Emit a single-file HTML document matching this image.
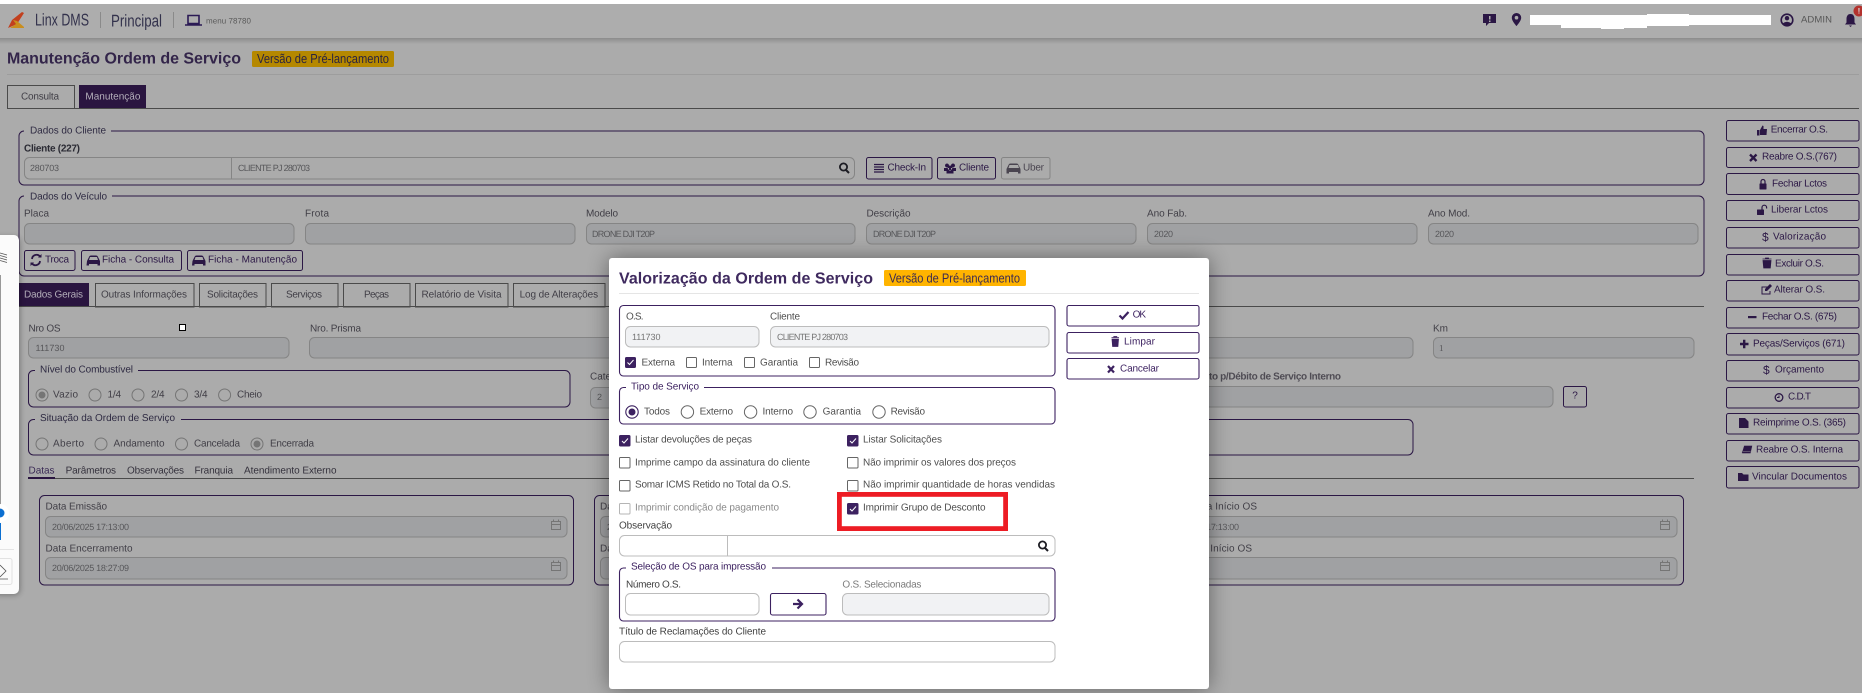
<!DOCTYPE html>
<html lang="pt-BR">
<head>
<meta charset="utf-8">
<title>Valorização da Ordem de Serviço</title>
<style>
html,body{margin:0;padding:0;background:#ababab;overflow:hidden}
svg{display:block;font-family:"Liberation Sans",sans-serif;filter:blur(.3px)}
text{dominant-baseline:central;font-size:10px;text-rendering:geometricPrecision}
.g{fill:#403e46}
.gb{fill:#3f3d45;font-weight:700}
.p{fill:#2b1745}
.v{fill:#57575a;font-size:9px}
.m{fill:#4e4e4e}
.mv{fill:#757575;font-size:9px}
.mp{fill:#3c2160}
.mb{fill:#404040}
.f{fill:none;stroke:#2b1745;stroke-width:1}
.fm{fill:none;stroke:#3c2160;stroke-width:1.1}
.b{fill:#ababab}
.i{fill:#a0a1a3;stroke:#858585;stroke-width:1}
.ie{fill:none;stroke:#858585;stroke-width:1}
.r{fill:none;stroke:#757575;stroke-width:1}
.cal{fill:none;stroke:#757575;stroke-width:1}
.mi{fill:#f1f2f4;stroke:#bcbcbc;stroke-width:1}
.mw{fill:#fff;stroke:#bcbcbc;stroke-width:1}
.cb{fill:#fff;stroke:#666;stroke-width:1}
.ck{fill:#3c2160;stroke:#3c2160;stroke-width:1}
.tk{fill:none;stroke:#fff;stroke-width:1}
</style>
</head>
<body>
<svg width="1862" height="693" viewBox="0 0 1862 693" xmlns="http://www.w3.org/2000/svg">
<defs>
<filter id="s" x="-20%" y="-20%" width="140%" height="140%"><feGaussianBlur stdDeviation="11"/></filter>
<filter id="s2" x="-60%" y="-10%" width="220%" height="120%"><feGaussianBlur stdDeviation="3"/></filter>
<linearGradient id="hs" x1="0" y1="0" x2="0" y2="1"><stop offset="0" stop-color="#8c8c8c"/><stop offset="1" stop-color="#ababab"/></linearGradient>
</defs>

<rect width="1862" height="693" fill="#ababab"/>
<!-- header -->
<rect x="0" y="0" width="1862" height="4" fill="#fff"/>
<rect x="0" y="38" width="1862" height="6" fill="url(#hs)"/>
<rect x="0" y="4" width="1862" height="34" fill="#adadad"/>
<polygon points="22,12 24,13 17,24 8,28 12,20" fill="#c2401e"/>
<polygon points="13,20 17,21 24,27 24,28 10,28 16,24" fill="#c98e1e"/>
<text x="35" y="20" style="font-size:17px" fill="#33324c" textLength="54" lengthAdjust="spacingAndGlyphs">Linx DMS</text>
<rect x="100" y="12" width="1" height="16" fill="#8a8a8a"/>
<text x="111" y="21" style="font-size:17px" fill="#33324c" textLength="51" lengthAdjust="spacingAndGlyphs">Principal</text>
<rect x="173" y="12" width="1" height="16" fill="#8a8a8a"/>
<path d="M188 15.500h11v8h-11zM185 25h17" fill="none" stroke="#2b1a55" stroke-width="1.600"/>
<text x="206" y="21" style="font-size:8px" fill="#5a5a5a" textLength="45">menu 78780</text>

<path d="M1483 14h13v9h-7l-3 3v-3h-3z" fill="#2b1745"/><rect x="1489" y="16" width="1.500" height="3.500" fill="#adadad"/><rect x="1489" y="20.500" width="1.500" height="1.500" fill="#adadad"/>
<path d="M1516.500 13a4.700 4.700 0 0 0-4.700 4.700c0 3.300 4.700 8.300 4.700 8.300s4.700-5 4.700-8.300a4.700 4.700 0 0 0-4.700-4.700z" fill="#2b1745"/><circle cx="1516.500" cy="17.700" r="1.800" fill="#adadad"/>
<path d="M1530 15h77v0h40v-1h42v1h82v10h-82v1h-42v2h-23v1h-23v-1h-40v-3h-31z" fill="#fff"/>
<circle cx="1787" cy="20" r="5.800" fill="none" stroke="#2b1745" stroke-width="1.600"/><circle cx="1787" cy="18.200" r="2.200" fill="#2b1745"/><path d="M1782.500 23.500q4.500-3.500 9 0l-2 2h-5z" fill="#2b1745"/>
<text x="1801" y="20" style="font-size:9.500px" fill="#565656" textLength="31">ADMIN</text>
<path d="M1850.500 14c-3 0-4 2.500-4 5v3.500l-1.500 2h11l-1.500-2V19c0-2.500-1-5-4-5zM1849 25.500h3l-1.500 1.500z" fill="#2b1745"/>
<circle cx="1859" cy="11" r="5.500" fill="#b3322e"/><text x="1859" y="11" style="font-size:8px;font-weight:700" fill="#ddd" text-anchor="middle">!</text>

<!-- page title -->
<text x="7" y="59" style="font-size:16px;font-weight:700" fill="#33254a" textLength="234">Manutenção Ordem de Serviço</text>
<rect x="252" y="51" width="142" height="16" rx="1.500" fill="#b58800"/>
<text x="257" y="58.500" style="font-size:13px" fill="#2a2340" textLength="132" lengthAdjust="spacingAndGlyphs">Versão de Pré-lançamento</text>
<rect x="7" y="74" width="1852" height="1" fill="#9d9d9d"/>

<!-- top tabs -->
<rect x="7.500" y="85.500" width="67" height="23" fill="none" stroke="#4a4a4a"/>
<text x="21" y="97" class="g" textLength="38">Consulta</text>
<rect x="79" y="85" width="67" height="23" fill="#2a1540"/>
<text x="85.400" y="97" fill="#b5b0bb" textLength="55">Manutenção</text>
<rect x="7" y="108" width="1852" height="1" fill="#4a4a4a"/>

<!-- Dados do Cliente -->
<rect x="19" y="131" width="1685" height="54" rx="5" class="f"/>
<rect x="24" y="128" width="87" height="6" class="b"/>
<text x="30" y="131" style="fill:#2e2a42" textLength="76">Dados do Cliente</text>
<text x="24" y="149" class="gb" style="fill:#2a2a33" textLength="56">Cliente (227)</text>
<rect x="24.500" y="157.500" width="830" height="21.500" rx="5" class="ie"/>
<rect x="231" y="158" width="1" height="21" fill="#858585"/>
<text x="30" y="168" class="v" textLength="29">280703</text>
<text x="238" y="168" class="v" textLength="72">CLIENTE PJ 280703</text>
<circle cx="843.500" cy="167" r="3.600" fill="none" stroke="#1d1d24" stroke-width="1.800"/><path d="M846 170l3 3" stroke="#1d1d24" stroke-width="2"/>
<rect x="866.500" y="157.500" width="65.500" height="21.500" rx="2" class="f"/>
<path d="M874 164.500h10M874 167h10M874 169.500h10M874 172h10" stroke="#2b1745" stroke-width="1.300"/>
<text x="887.500" y="168" class="p" textLength="38.500">Check-In</text>
<rect x="937.500" y="157.500" width="58" height="21.500" rx="2" class="f"/>
<path d="M947 163.500a2 2 0 1 0 .01 0zM953 163.500a2 2 0 1 0 .01 0zM950 165.500a2.300 2.300 0 1 0 .01 0zM944 168h5v3h-5zM951 168h5v3h-5zM946.500 170.500h7v3h-7z" fill="#2b1745"/>
<text x="959" y="168" class="p" textLength="30">Cliente</text>
<rect x="1001.500" y="157.500" width="48.500" height="21.500" rx="2" fill="none" stroke="#858585"/>
<path fill-rule="evenodd" d="M1006.500 169l2-4q.5-1.500 2-1.500h6q1.500 0 2 1.500l2 4v4.500h-2.500v-1.500h-9v1.500h-2.500zM1009.500 165l-1 3h10.500l-1-3z" fill="#4a4550"/>
<text x="1023" y="168" fill="#4a4550" textLength="21">Uber</text>

<!-- Dados do Veículo -->
<rect x="19" y="196" width="1685" height="80" rx="5" class="f"/>
<rect x="24" y="193" width="88" height="6" class="b"/>
<text x="30" y="197" style="fill:#2e2a42" textLength="77">Dados do Veículo</text>
<text x="24" y="214" class="g" textLength="25">Placa</text>
<rect x="24.500" y="223.500" width="269.500" height="20.500" rx="5" class="i"/>
<text x="305" y="214" class="g" textLength="24">Frota</text>
<rect x="305.500" y="223.500" width="269.500" height="20.500" rx="5" class="i"/>
<text x="586" y="214" class="g" textLength="32">Modelo</text>
<rect x="586.500" y="223.500" width="268.500" height="20.500" rx="5" class="i"/>
<text x="592" y="234" class="v" textLength="63">DRONE DJI T20P</text>
<text x="866.500" y="214" class="g" textLength="44">Descrição</text>
<rect x="866.500" y="223.500" width="269.500" height="20.500" rx="5" class="i"/>
<text x="873" y="234" class="v" textLength="63">DRONE DJI T20P</text>
<text x="1147" y="214" class="g" textLength="40">Ano Fab.</text>
<rect x="1147.500" y="223.500" width="269.500" height="20.500" rx="5" class="i"/>
<text x="1154" y="234" class="v" textLength="19">2020</text>
<text x="1428" y="214" class="g" textLength="42">Ano Mod.</text>
<rect x="1428.500" y="223.500" width="269.500" height="20.500" rx="5" class="i"/>
<text x="1435" y="234" class="v" textLength="19">2020</text>

<rect x="24.500" y="250.500" width="50.500" height="20" rx="2" class="f"/>
<path d="M32 259a4.500 4.500 0 0 1 8-2.500M40 261a4.500 4.500 0 0 1-8 2.500" fill="none" stroke="#2b1745" stroke-width="1.800"/><path d="M38 257.500h3.500v-3.500zM34 262.500h-3.500v3.500z" fill="#2b1745"/>
<text x="45" y="260" class="p" textLength="24">Troca</text>
<rect x="81.500" y="250.500" width="100" height="20" rx="2" class="f"/>
<path fill-rule="evenodd" d="M87 261l2-4q.5-1.500 2-1.500h5q1.500 0 2 1.500l2 4v4.500h-2.500v-1.500h-8.500v1.500h-2.500zM90 257l-1 3h9l-1-3z" fill="#2b1745"/>
<text x="102" y="260" class="p" textLength="72">Ficha - Consulta</text>
<rect x="187.500" y="250.500" width="115" height="20" rx="2" class="f"/>
<path fill-rule="evenodd" d="M192.500 261l2-4q.5-1.500 2-1.500h5q1.500 0 2 1.500l2 4v4.500h-2.500v-1.500h-8.500v1.500h-2.500zM195.500 257l-1 3h9l-1-3z" fill="#2b1745"/>
<text x="208" y="260" class="p" textLength="89">Ficha - Manutenção</text>

<!-- tabs 2 -->
<rect x="19" y="283" width="70" height="24" fill="#2a1540"/>
<text x="24" y="295" fill="#b5b0bb" textLength="59">Dados Gerais</text>
<g fill="none" stroke="#4a4a4a">
<rect x="95.500" y="283.500" width="98.500" height="23.500"/>
<rect x="199.500" y="283.500" width="66.500" height="23.500"/>
<rect x="271.500" y="283.500" width="66.500" height="23.500"/>
<rect x="343.500" y="283.500" width="66.500" height="23.500"/>
<rect x="415.500" y="283.500" width="92.500" height="23.500"/>
<rect x="513.500" y="283.500" width="91.500" height="23.500"/>
</g>
<text x="101" y="295" class="g" textLength="86">Outras Informações</text>
<text x="207" y="295" class="g" textLength="51">Solicitações</text>
<text x="286" y="295" class="g" textLength="36">Serviços</text>
<text x="364" y="295" class="g" textLength="25">Peças</text>
<text x="421.500" y="295" class="g" textLength="80">Relatório de Visita</text>
<text x="519.600" y="295" class="g" textLength="78.500">Log de Alterações</text>
<rect x="19" y="306" width="1685" height="1" fill="#4a4a4a"/>

<text x="28.500" y="329" class="g" textLength="32">Nro OS</text>
<rect x="179.500" y="324.500" width="6" height="6" fill="#fff" stroke="#000"/>
<rect x="28.500" y="337.500" width="260.500" height="20.500" rx="5" class="i"/>
<text x="35.500" y="348" class="v" textLength="29">111730</text>
<text x="310" y="329" class="g" textLength="51">Nro. Prisma</text>
<rect x="309.500" y="337.500" width="400" height="20.500" rx="5" class="i"/>
<rect x="1100.500" y="337.500" width="312.500" height="20.500" rx="5" class="i"/>
<text x="1433" y="329" class="g" textLength="15">Km</text>
<rect x="1433.500" y="337.500" width="260.500" height="20.500" rx="5" class="i"/>
<text x="1439" y="348" class="v" style="font-family:'Liberation Serif',serif">1</text>

<!-- Nível -->
<rect x="28.500" y="370.500" width="541.500" height="36.500" rx="5" class="f"/>
<rect x="35" y="367" width="103" height="6" class="b"/>
<text x="40" y="370" style="fill:#2e2a42" textLength="93">Nível do Combustível</text>
<circle cx="42" cy="395" r="6" class="r"/><circle cx="42" cy="395" r="3.500" fill="#757575"/>
<text x="53" y="395" class="g" textLength="25">Vazio</text>
<circle cx="95" cy="395" r="6" class="r"/><text x="107.500" y="395" class="g" textLength="13.500">1/4</text>
<circle cx="138" cy="395" r="6" class="r"/><text x="151" y="395" class="g" textLength="13.500">2/4</text>
<circle cx="181.500" cy="395" r="6" class="r"/><text x="194" y="395" class="g" textLength="13.500">3/4</text>
<circle cx="224.600" cy="395" r="6" class="r"/><text x="237" y="395" class="g" textLength="25">Cheio</text>

<text x="590" y="377" class="g">Categoria</text>
<rect x="590.500" y="387.500" width="300" height="20.500" rx="5" class="i"/>
<text x="597" y="397" class="v">2</text>

<text x="1209" y="377" class="g" style="font-weight:700;fill:#4f4c54" textLength="132">to p/Débito de Serviço Interno</text>
<rect x="1000.500" y="386.500" width="552.500" height="20.500" rx="5" class="i"/>
<rect x="1563.500" y="386.500" width="23" height="20.500" rx="2" class="f"/>
<text x="1575" y="396" class="p" text-anchor="middle">?</text>

<!-- Situação -->
<rect x="28.500" y="419.500" width="1384.500" height="35.500" rx="5" class="f"/>
<rect x="35" y="416" width="146" height="6" class="b"/>
<text x="40" y="418.500" style="fill:#2e2a42" textLength="135">Situação da Ordem de Serviço</text>
<circle cx="42" cy="444" r="6" class="r"/><text x="53" y="444" class="g" textLength="31">Aberto</text>
<circle cx="101" cy="444" r="6" class="r"/><text x="113.500" y="444" class="g" textLength="51">Andamento</text>
<circle cx="181.500" cy="444" r="6" class="r"/><text x="194" y="444" class="g" textLength="46">Cancelada</text>
<circle cx="257" cy="444" r="6" class="r"/><circle cx="257" cy="444" r="3.500" fill="#757575"/><text x="270" y="444" class="g" textLength="44">Encerrada</text>

<!-- subtabs -->
<text x="28.500" y="471" style="fill:#3a2a55" textLength="26">Datas</text>
<text x="65.600" y="471" style="fill:#34313c" textLength="50.400">Parâmetros</text>
<text x="127" y="471" style="fill:#34313c" textLength="57">Observações</text>
<text x="194.500" y="471" style="fill:#34313c" textLength="38.500">Franquia</text>
<text x="244" y="471" style="fill:#34313c" textLength="92.500">Atendimento Externo</text>
<rect x="28" y="478" width="1666" height="1" fill="#4a4a4a"/>
<rect x="28" y="477" width="27" height="2" fill="#2a1540"/>

<!-- dates -->
<rect x="39.500" y="495.500" width="534" height="89.500" rx="5" class="f"/>
<text x="45.500" y="507" class="g" textLength="61.500">Data Emissão</text>
<rect x="45.500" y="516.500" width="521.500" height="20.500" rx="5" class="i"/>
<text x="52" y="527" class="v" textLength="77">20/06/2025 17:13:00</text>
<path d="M551.500 521.500h9v8h-9zM551.500 524.500h9M553.500 519.500v2M558.500 519.500v2" class="cal"/>
<text x="45.500" y="549" class="g" textLength="87">Data Encerramento</text>
<rect x="45.500" y="557.500" width="521.500" height="21.500" rx="5" class="i"/>
<text x="52" y="568" class="v" textLength="77">20/06/2025 18:27:09</text>
<path d="M551.500 562.500h9v8h-9zM551.500 565.500h9M553.500 560.500v2M558.500 560.500v2" class="cal"/>

<rect x="594.500" y="495.500" width="300" height="89.500" rx="5" class="f"/>
<text x="600" y="507" class="g">Data</text>
<rect x="600.500" y="516.500" width="280" height="20.500" rx="5" class="i"/>
<text x="607" y="527" class="v">20/06/2025</text>
<text x="600" y="549" class="g">Data</text>
<rect x="600.500" y="557.500" width="280" height="21.500" rx="5" class="i"/>

<rect x="1100.500" y="495.500" width="583" height="89.500" rx="5" class="f"/>
<text x="1191" y="507" class="g" textLength="66">Data Início OS</text>
<rect x="1106.500" y="516.500" width="570.500" height="20.500" rx="5" class="i"/>
<text x="1162" y="527" class="v" textLength="77">20/06/2025 17:13:00</text>
<path d="M1660.500 521.500h9v8h-9zM1660.500 524.500h9M1662.500 519.500v2M1667.500 519.500v2" class="cal"/>
<text x="1186" y="549" class="g" textLength="66">Data Início OS</text>
<rect x="1106.500" y="557.500" width="570.500" height="21.500" rx="5" class="i"/>
<path d="M1660.500 562.500h9v8h-9zM1660.500 565.500h9M1662.500 560.500v2M1667.500 560.500v2" class="cal"/>

<!-- right action buttons -->
<rect x="1726.500" y="120.500" width="132.500" height="20.500" rx="2" class="f"/>
<rect x="1726.500" y="147.500" width="132.500" height="20" rx="2" class="f"/>
<rect x="1726.500" y="173.500" width="132.500" height="21" rx="2" class="f"/>
<rect x="1726.500" y="200.500" width="132.500" height="20" rx="2" class="f"/>
<rect x="1726.500" y="227.500" width="132.500" height="20.500" rx="2" class="f"/>
<rect x="1726.500" y="254.500" width="132.500" height="20.500" rx="2" class="f"/>
<rect x="1726.500" y="280.500" width="132.500" height="20.500" rx="2" class="f"/>
<rect x="1726.500" y="307.500" width="132.500" height="20.500" rx="2" class="f"/>
<rect x="1726.500" y="333.500" width="132.500" height="21.500" rx="2" class="f"/>
<rect x="1726.500" y="360.500" width="132.500" height="20.500" rx="2" class="f"/>
<rect x="1726.500" y="387.500" width="132.500" height="20.500" rx="2" class="f"/>
<rect x="1726.500" y="413.500" width="132.500" height="20.500" rx="2" class="f"/>
<rect x="1726.500" y="440.500" width="132.500" height="20.500" rx="2" class="f"/>
<rect x="1726.500" y="466.500" width="132.500" height="21.500" rx="2" class="f"/>

<path d="M1757 130h2.500v5.500H1757zM1760 130l2.500-4.500 1 .5v3h3.500l-.5 6h-6.500z" fill="#2b1745"/>
<text x="1770.700" y="130" class="p" textLength="57.300">Encerrar O.S.</text>
<path d="M1750 154.500l6.500 6.500M1756.500 154.500l-6.500 6.500" stroke="#2b1745" stroke-width="2.300"/>
<text x="1762" y="157" class="p" textLength="75">Reabre O.S.(767)</text>
<rect x="1759.500" y="183.500" width="7" height="6" rx=".5" fill="#2b1745"/><path d="M1761 183.500v-2a2 2 0 0 1 4 0v2" fill="none" stroke="#2b1745" stroke-width="1.200"/>
<text x="1772" y="184" class="p" textLength="55">Fechar Lctos</text>
<rect x="1757" y="209.500" width="7" height="5.500" rx=".5" fill="#2b1745"/><path d="M1762 209.500v-2a2.300 2.300 0 0 1 4.600 0v1" fill="none" stroke="#2b1745" stroke-width="1.200"/>
<text x="1771" y="210" class="p" textLength="57">Liberar Lctos</text>
<text x="1762" y="237" class="p" style="font-size:12px" textLength="6">$</text>
<text x="1773" y="237" class="p" textLength="53">Valorização</text>
<path d="M1763 260.500h8l-.7 7.500h-6.600zM1762.500 259h9M1765.500 259v-1h3v1" fill="#2b1745" stroke="#2b1745" stroke-width=".8"/>
<text x="1775" y="264" class="p" textLength="49">Excluir O.S.</text>
<path d="M1770 287h-8v7h8v-3" fill="none" stroke="#2b1745" stroke-width="1"/><path d="M1765 291v-2l5-5 2 2-5 5z" fill="#2b1745"/>
<text x="1774" y="290" class="p" textLength="51">Alterar O.S.</text>
<rect x="1748" y="316" width="8.500" height="2.200" fill="#2b1745"/>
<text x="1762" y="317" class="p" textLength="75">Fechar O.S. (675)</text>
<path d="M1740 344h8.500M1744.200 339.800v8.500" stroke="#2b1745" stroke-width="2.400"/>
<text x="1753" y="344" class="p" textLength="92">Peças/Serviços (671)</text>
<text x="1763" y="370" class="p" style="font-size:12px" textLength="6">$</text>
<text x="1775" y="370" class="p" textLength="49">Orçamento</text>
<circle cx="1779" cy="397.500" r="3.800" fill="none" stroke="#2b1745" stroke-width="1.300"/><path d="M1779 395.500v2h-2" fill="none" stroke="#2b1745"/>
<text x="1788" y="397" class="p" textLength="23">C.D.T</text>
<path d="M1739 418h6l3.500 3.500V428h-9.500z" fill="#2b1745"/>
<text x="1753" y="423" class="p" textLength="93">Reimprime O.S. (365)</text>
<path d="M1744 445.500h8.500l-1.800 8h-8.500q-1-1 0-2l1.800-6zM1743 451.500h7.500" fill="#2b1745" stroke="#ababab" stroke-width=".4"/>
<text x="1756" y="450" class="p" textLength="87">Reabre O.S. Interna</text>
<path d="M1738 473h4l1.500 1.500h5v6.500h-10.500z" fill="#2b1745"/>
<text x="1752" y="477" class="p" textLength="95">Vincular Documentos</text>

<!-- left floating panel -->
<rect x="-8" y="237" width="28" height="358" rx="5" fill="#000" opacity=".3" filter="url(#s2)"/>
<rect x="-8" y="235" width="27" height="359" rx="5" fill="#fbfbfb"/>
<path d="M0 253l7 2M0 255.500l7 2M0 258l7 2M0 260.500l7 2" fill="none" stroke="#555" stroke-width=".8"/>
<rect x="0" y="275" width="1" height="232" fill="#999"/>
<circle cx="0" cy="513" r="9" fill="#fff"/>
<circle cx="0" cy="513" r="4.500" fill="#0b6fd1"/>
<rect x="0" y="523" width="1" height="17" fill="#0b6fd1"/>
<rect x="0" y="549" width="14" height="1" fill="#e4e4e4"/>
<rect x="-4" y="558.500" width="16" height="26" rx="2" fill="none" stroke="#e2e2e2"/>
<path d="M0 565l6 6-6 6M0 579h8" fill="none" stroke="#555" stroke-width=".8"/>

<!-- modal -->
<rect x="609" y="258" width="600" height="431" rx="3" fill="#000" opacity=".42" filter="url(#s)"/>
<rect x="609" y="258" width="600" height="431" rx="3" fill="#fff"/>
<text x="619" y="279" style="font-size:16px;font-weight:700" fill="#3f2a5f" textLength="254">Valorização da Ordem de Serviço</text>
<rect x="884" y="270" width="142" height="16" rx="1.500" fill="#ffb400"/>
<text x="889" y="278" style="font-size:13px" fill="#3b2a52" textLength="131" lengthAdjust="spacingAndGlyphs">Versão de Pré-lançamento</text>
<rect x="619" y="293" width="580" height="1" fill="#e5e5e5"/>

<rect x="619.500" y="305.500" width="435.500" height="70.500" rx="4" class="fm"/>
<text x="626" y="317" class="m" textLength="17.500">O.S.</text>
<rect x="625.500" y="326.500" width="133.500" height="20.500" rx="5" class="mi"/>
<text x="632" y="337" class="mv" textLength="28.500">111730</text>
<text x="770" y="317" class="m" textLength="30">Cliente</text>
<rect x="770.500" y="326.500" width="278.500" height="20.500" rx="5" class="mi"/>
<text x="777" y="337" class="mv" textLength="71">CLIENTE PJ 280703</text>

<rect x="625.500" y="357.500" width="10" height="10" rx="1" class="ck"/><path d="M627.500 362.500l2 2 4-4.500" class="tk"/>
<text x="641.500" y="363" class="m" textLength="33.500">Externa</text>
<rect x="686.500" y="357.500" width="10" height="10" rx="1" class="cb"/>
<text x="702" y="363" class="m" textLength="30.500">Interna</text>
<rect x="744.500" y="357.500" width="10" height="10" rx="1" class="cb"/>
<text x="760" y="363" class="m" textLength="38">Garantia</text>
<rect x="809.500" y="357.500" width="10" height="10" rx="1" class="cb"/>
<text x="825" y="363" class="m" textLength="34">Revisão</text>

<rect x="619.500" y="387.500" width="435.500" height="36.500" rx="4" class="fm"/>
<rect x="626" y="384" width="78" height="6" fill="#fff"/>
<text x="631" y="387" class="mp" textLength="68">Tipo de Serviço</text>
<circle cx="632" cy="412" r="6.200" fill="none" stroke="#3c2160" stroke-width="1.100"/><circle cx="632" cy="412" r="3.500" fill="#3c2160"/>
<text x="644" y="412" class="m" textLength="26">Todos</text>
<circle cx="687.400" cy="412" r="6.200" fill="none" stroke="#666"/><text x="699.600" y="412" class="m" textLength="33.400">Externo</text>
<circle cx="750.600" cy="412" r="6.200" fill="none" stroke="#666"/><text x="762.500" y="412" class="m" textLength="30.500">Interno</text>
<circle cx="810" cy="412" r="6.200" fill="none" stroke="#666"/><text x="822.600" y="412" class="m" textLength="38.400">Garantia</text>
<circle cx="879" cy="412" r="6.200" fill="none" stroke="#666"/><text x="890.600" y="412" class="m" textLength="34.400">Revisão</text>

<rect x="1067" y="305.500" width="132" height="20.500" rx="2" class="fm"/>
<path d="M1119.500 315.500l3 3 6-6.500" fill="none" stroke="#3c2160" stroke-width="2.200"/>
<text x="1132.600" y="315" class="mp" textLength="13.400">OK</text>
<rect x="1067" y="332.500" width="132" height="20.500" rx="2" class="fm"/>
<path d="M1112 339h6.500l-.6 7.500h-5.300zM1111.500 337.500h7.500M1113.800 337.500v-1h3v1" fill="#3c2160" stroke="#3c2160" stroke-width=".8"/>
<text x="1124" y="342" class="mp" textLength="31">Limpar</text>
<rect x="1067" y="358.500" width="132" height="20.500" rx="2" class="fm"/>
<path d="M1108 366l6 6.500M1114 366l-6 6.500" stroke="#3c2160" stroke-width="2.200"/>
<text x="1120" y="369" class="mp" textLength="39">Cancelar</text>

<rect x="619.500" y="435.500" width="10.500" height="10.500" rx="1" class="ck"/><path d="M622 441l2 2 4-4.500" class="tk"/>
<text x="635" y="440" class="m" textLength="117">Listar devoluções de peças</text>
<rect x="847.500" y="435.500" width="10.500" height="10.500" rx="1" class="ck"/><path d="M850 441l2 2 4-4.500" class="tk"/>
<text x="863" y="440" class="m" textLength="79">Listar Solicitações</text>

<rect x="619.500" y="457.500" width="10.500" height="10.500" rx="1" class="cb"/>
<text x="635" y="463" class="m" textLength="175">Imprime campo da assinatura do cliente</text>
<rect x="847.500" y="457.500" width="10.500" height="10.500" rx="1" class="cb"/>
<text x="863" y="463" class="m" textLength="153">Não imprimir os valores dos preços</text>

<rect x="619.500" y="480.500" width="10.500" height="10.500" rx="1" class="cb"/>
<text x="635" y="485" class="m" textLength="156">Somar ICMS Retido no Total da O.S.</text>
<rect x="847.500" y="480.500" width="10.500" height="10.500" rx="1" class="cb"/>
<text x="863" y="485" class="m" textLength="192">Não imprimir quantidade de horas vendidas</text>

<rect x="619.500" y="503.500" width="10.500" height="10.500" rx="1" fill="#fff" stroke="#b5b5b5"/>
<text x="635" y="508" fill="#8a8a8a" textLength="144">Imprimir condição de pagamento</text>
<rect x="847.500" y="503.500" width="10.500" height="10.500" rx="1" class="ck"/><path d="M850 509l2 2 4-4.500" class="tk"/>
<text x="863" y="508" class="m" textLength="122.600">Imprimir Grupo de Desconto</text>
<rect x="839.400" y="494.400" width="166.200" height="34.200" fill="none" stroke="#ed1c24" stroke-width="4.800"/>

<text x="619" y="526" class="mb" textLength="53">Observação</text>
<rect x="619.500" y="535.500" width="435.500" height="20.500" rx="5" class="mw"/>
<rect x="727" y="536" width="1" height="20" fill="#bcbcbc"/>
<circle cx="1042.500" cy="545" r="3.600" fill="none" stroke="#1d1d24" stroke-width="1.800"/><path d="M1045 548l3 3" stroke="#1d1d24" stroke-width="2"/>

<rect x="619.500" y="568" width="435.500" height="53" rx="4" class="fm"/>
<rect x="626" y="564" width="146" height="8" fill="#fff"/>
<text x="631" y="567" class="mp" textLength="135">Seleção de OS para impressão</text>
<text x="626" y="585" class="mb" textLength="55">Número O.S.</text>
<rect x="625.500" y="593.500" width="133.500" height="21.500" rx="5" class="mw"/>
<rect x="770.500" y="593.500" width="55.500" height="21.500" rx="2" class="fm"/>
<path d="M793 604h8M797.500 599.500l4.500 4.500-4.500 4.500" fill="none" stroke="#3c2160" stroke-width="2.200"/>
<text x="842.400" y="585" fill="#7a7a7a" textLength="79">O.S. Selecionadas</text>
<rect x="842.500" y="593.500" width="206.500" height="21.500" rx="5" class="mi"/>

<text x="619" y="632" class="mb" textLength="147">Título de Reclamações do Cliente</text>
<rect x="619.500" y="641.500" width="435.500" height="20.500" rx="5" class="mw"/>
</svg>
</body>
</html>
